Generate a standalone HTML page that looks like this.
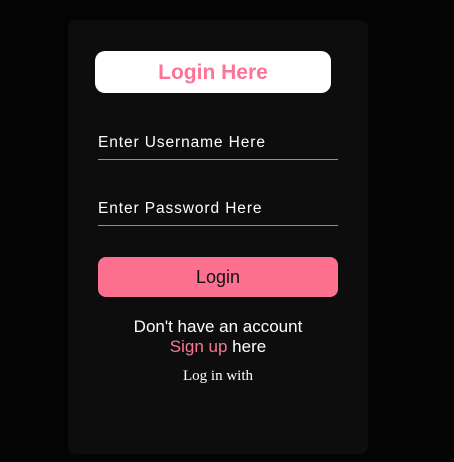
<!DOCTYPE html>
<html><head><style>
html,body{margin:0;padding:0;}
body{width:454px;height:462px;background:#040404;position:relative;overflow:hidden;font-family:"Liberation Sans",sans-serif;}
.panel{position:absolute;left:68px;top:20px;width:300px;height:434px;background:#0d0d0d;border-radius:8px;}
.title{position:absolute;left:95px;top:51px;width:236px;height:42px;background:#fff;border-radius:10px;color:#fd7596;font-weight:bold;font-size:21px;text-align:center;line-height:43px;}
.lbl{position:absolute;left:98px;color:#fff;font-size:15.5px;letter-spacing:0.9px;}
.line{position:absolute;left:98px;width:240px;height:1px;background:#ff5c7c;}
.btn{position:absolute;left:98px;top:257px;width:240px;height:40px;background:#fe7090;border-radius:8px;text-align:center;line-height:40px;font-size:18px;color:#111;}
.t{position:absolute;left:68px;width:300px;text-align:center;color:#fff;}
</style></head><body>
<div class="panel"></div>
<div class="title">Login Here</div>
<div class="lbl" style="top:134px">Enter Username Here</div>
<div class="line" style="top:159px"></div>
<div class="lbl" style="top:200px">Enter Password Here</div>
<div class="line" style="top:225px"></div>
<div class="btn">Login</div>
<div class="t" style="top:317px;font-size:17px">Don't have an account</div>
<div class="t" style="top:337px;font-size:17px"><span style="color:#fd7596">Sign up</span> here</div>
<div class="t" style="top:368px;font-size:15px;font-family:'Liberation Serif',serif">Log in with</div>
</body></html>
